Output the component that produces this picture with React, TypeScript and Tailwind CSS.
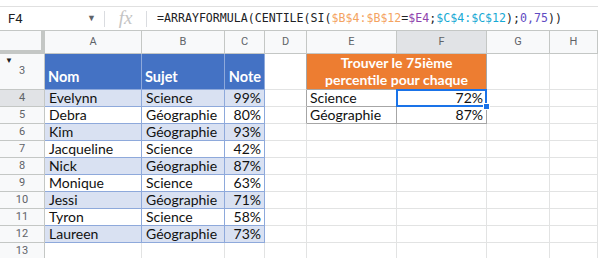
import React from 'react'

const COLS = ['A', 'B', 'C', 'D', 'E', 'F', 'G', 'H']

const DATA: [string, string, string][] = [
  ['Evelynn', 'Science', '99%'],
  ['Debra', 'Géographie', '80%'],
  ['Kim', 'Géographie', '93%'],
  ['Jacqueline', 'Science', '42%'],
  ['Nick', 'Géographie', '87%'],
  ['Monique', 'Science', '63%'],
  ['Jessi', 'Géographie', '71%'],
  ['Tyron', 'Science', '58%'],
  ['Laureen', 'Géographie', '73%'],
]

const cellFont = { fontFamily: 'Lato, "Liberation Sans", sans-serif' }

function RowHeader({ n, active = false }: { n: number; active?: boolean }) {
  return (
    <div
      className={`relative flex items-center justify-center border-r border-b border-[#c4c7c5] text-[11px] text-[#5f6368] ${active ? 'bg-[#e1e3e6]' : 'bg-[#f8f9fa]'}`}
      style={{ fontFamily: 'Roboto, sans-serif' }}
    >
      {n === 3 && (
        <span className="absolute left-[5px] top-[3px] text-[8px] leading-none text-[#202124]">▼</span>
      )}
      {n}
    </div>
  )
}

function Plain() {
  return <div className="border-r border-b border-[#e2e3e3] bg-white" />
}

export default function App() {
  return (
    <div className="h-[258px] w-[598px] overflow-hidden bg-white">
      <div className="h-[7px] border-b border-[#e0e0e0]" />

      {/* formula bar */}
      <div className="flex h-[24px] items-center border-b border-[#c4c7c5]" style={{ fontFamily: 'Roboto, sans-serif' }}>
        <div className="flex w-[104px] items-center justify-between pl-[8px] pr-[8px]">
          <span className="text-[13px] text-[#202124]">F4</span>
          <span className="text-[9px] text-[#5f6368]">▼</span>
        </div>
        <div className="h-[16px] w-px bg-[#dadce0]" />
        <div className="flex w-[41px] items-center justify-center">
          <span className="text-[19px] italic text-[#c4c4c4]" style={{ fontFamily: '"Liberation Serif", serif' }}>
            fx
          </span>
        </div>
        <div className="h-[16px] w-px bg-[#dadce0]" />
        <div
          className="pl-[10px] text-[11.6px] text-[#202124]"
          style={{ fontFamily: '"DejaVu Sans Mono", monospace' }}
        >
          =ARRAYFORMULA(CENTILE(SI(<span className="text-[#f4a361]">$B$4:$B$12</span>=
          <span className="text-[#8e44ad]">$E4</span>;<span className="text-[#17a9d4]">$C$4:$C$12</span>);
          <span className="text-[#5e4bc2]">0,75</span>))
        </div>
      </div>

      {/* grid */}
      <div className="grid grid-cols-[45px_97px_83px_40px_42px_90px_90px_63px_1fr] grid-rows-[23px_36px_repeat(10,17px)]">
        <div className="border-r-4 border-b-4 border-[#c4c7c5] bg-[#f8f9fa]" />
        {COLS.map((c) => (
          <div
            key={c}
            className={`flex items-center justify-center border-r border-b border-[#c4c7c5] text-[11px] text-[#5f6368] ${c === 'F' ? 'bg-[#e1e3e6]' : 'bg-[#f8f9fa]'}`}
            style={{ fontFamily: 'Roboto, sans-serif' }}
          >
            {c}
          </div>
        ))}

        {/* row 3 */}
        <RowHeader n={3} />
        <div className="flex items-end border-r border-b border-[#8ea9db] bg-[#4472c4] px-[3px] pb-[1px] text-[14.5px] font-bold text-white" style={cellFont}>
          Nom
        </div>
        <div className="flex items-end border-r border-b border-[#8ea9db] bg-[#4472c4] px-[3px] pb-[1px] text-[14.5px] font-bold text-white" style={cellFont}>
          Sujet
        </div>
        <div className="flex items-end justify-end border-r border-b border-[#8ea9db] bg-[#4472c4] px-[3px] pb-[1px] text-[14.5px] font-bold text-white" style={cellFont}>
          Note
        </div>
        <div className="border-r border-b border-r-[#a6a6a6] border-b-[#e2e3e3] bg-white" />
        <div
          className="col-span-2 flex flex-col items-center justify-end border-r border-b border-[#a6a6a6] bg-[#ed7d31] pb-[1px] text-[14px] leading-[17px] font-bold text-white"
          style={cellFont}
        >
          <span>Trouver le 75ième</span>
          <span>percentile pour chaque</span>
        </div>
        <Plain />
        <Plain />

        {DATA.map(([nom, sujet, note], i) => {
          const row = i + 4
          const bg = i % 2 === 0 ? 'bg-[#d9e1f2]' : 'bg-white'
          const side = row === 4 ? ['Science', '72%'] : row === 5 ? ['Géographie', '87%'] : null
          return (
            <React.Fragment key={row}>
              <RowHeader n={row} active={row === 4} />
              <div className={`flex items-end border-r border-b border-[#8ea9db] ${bg} px-[4px] text-[14px] leading-[16px] text-[#111]`} style={cellFont}>
                {nom}
              </div>
              <div className={`flex items-end border-r border-b border-[#8ea9db] ${bg} px-[4px] text-[14px] leading-[16px] text-[#111]`} style={cellFont}>
                {sujet}
              </div>
              <div className={`flex items-end justify-end border-r border-b border-[#8ea9db] ${bg} px-[3px] text-[14px] leading-[16px] text-[#111]`} style={cellFont}>
                {note}
              </div>
              {side ? (
                <>
                  <div className="border-r border-b border-r-[#a6a6a6] border-b-[#e2e3e3] bg-white" />
                  <div className="flex items-end border-r border-b border-[#a6a6a6] bg-white px-[3px] text-[14px] leading-[16px] text-[#111]" style={cellFont}>
                    {side[0]}
                  </div>
                  <div className="relative flex items-end justify-end border-r border-b border-[#a6a6a6] bg-white px-[3px] text-[14px] leading-[16px] text-[#111]" style={cellFont}>
                    {side[1]}
                    {row === 4 && (
                      <div className="absolute -top-px -left-px -right-px -bottom-px z-10 border-2 border-[#1a73e8]">
                        <div className="absolute -right-[5px] -bottom-[5px] h-[7px] w-[7px] border border-white bg-[#1a73e8]" />
                      </div>
                    )}
                  </div>
                </>
              ) : (
                <>
                  <Plain />
                  <Plain />
                  <Plain />
                </>
              )}
              <Plain />
              <Plain />
            </React.Fragment>
          )
        })}

        <RowHeader n={13} />
        {COLS.map((c) => (
          <Plain key={c} />
        ))}
      </div>
    </div>
  )
}
